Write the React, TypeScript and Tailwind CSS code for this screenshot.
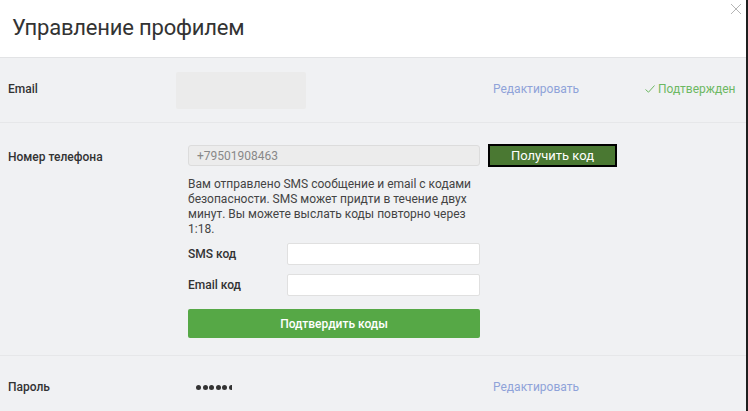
import React from "react";

export default function App() {
  return (
    <div
      className="relative w-[748px] h-[411px] overflow-hidden bg-[#f0f1f3] text-[#333]"
      style={{ fontFamily: "Roboto, 'Liberation Sans', sans-serif" }}
    >
      <div className="flex flex-col w-[746px] h-full">
        {/* Header */}
        <div className="relative h-[58px] bg-white border-b border-[#e2e3e5] flex items-center pl-[12px] shrink-0">
          <h1 className="text-[22px] font-normal text-[#333] tracking-[-0.2px] mt-[-2px]">Управление профилем</h1>
          <button className="absolute right-[4px] top-[3px] text-[#b5b5b5]" aria-label="close">
            <svg width="12" height="12" viewBox="0 0 12 12" stroke="currentColor" strokeWidth="1" fill="none">
              <path d="M1 1 L11 11 M11 1 L1 11" />
            </svg>
          </button>
        </div>

        {/* Email row */}
        <div className="h-[65px] flex items-center border-b border-[#e6e7e9] shrink-0">
          <div className="w-[176px] pl-[8px] text-[12px] font-medium text-[#333] mt-[-2px]">Email</div>
          <div className="w-[130px] h-[37px] bg-[#ebebeb] rounded-[2px]" />
          <div className="ml-[187px] text-[12px] text-[#8fa3d9] mt-[-2px]">Редактировать</div>
          <div className="ml-[66px] text-[12px] text-[#6cb862] flex items-center gap-[3px] mt-[-2px]">
            <svg width="10" height="8" viewBox="0 0 10 8" fill="none" stroke="currentColor" strokeWidth="1">
              <path d="M0.5 4.5 L3.5 7.2 L9.5 0.5" />
            </svg>
            <span>Подтвержден</span>
          </div>
        </div>

        {/* Phone row */}
        <div className="flex border-b border-[#e6e7e9] pt-[21px] pb-[17px] shrink-0">
          <div className="w-[188px] pl-[8px] pt-[4px] text-[12px] font-medium text-[#333]">Номер телефона</div>
          <div className="flex flex-col">
            <div className="flex items-center gap-[8px]">
              <div className="w-[292px] h-[21px] bg-[#ececec] border border-[#dcdcdc] rounded-[3px] pl-[8px] flex items-center text-[12px] text-[#888]">
                +79501908463
              </div>
              <button className="w-[129px] h-[23px] bg-[#4a7832] border-2 border-black text-white text-[13px] flex items-center justify-center">
                Получить код
              </button>
            </div>
            <p className="w-[292px] mt-[10px] text-[12px] leading-[15px] text-[#444]">
              Вам отправлено SMS сообщение и email с кодами безопасности. SMS может придти в течение двух минут. Вы можете выслать коды повторно через 1:18.
            </p>
            <div className="flex items-center mt-[6px]">
              <div className="w-[99px] text-[12px] font-medium text-[#333]">SMS код</div>
              <input className="w-[193px] h-[22px] bg-white border border-[#e0e0e0] rounded-[2px] outline-none" />
            </div>
            <div className="flex items-center mt-[9px]">
              <div className="w-[99px] text-[12px] font-medium text-[#333]">Email код</div>
              <input className="w-[193px] h-[22px] bg-white border border-[#e0e0e0] rounded-[2px] outline-none" />
            </div>
            <button className="w-[292px] h-[29px] mt-[13px] bg-[#56a846] rounded-[2px] text-white text-[12px] font-medium">
              Подтвердить коды
            </button>
          </div>
        </div>

        {/* Password row */}
        <div className="flex items-center h-[62px] shrink-0">
          <div className="w-[196px] pl-[8px] text-[12px] font-medium text-[#333]">Пароль</div>
          <div className="w-[297px] flex items-center gap-[1.5px]">
            <span className="w-[5px] h-[5px] rounded-full bg-[#333]" />
            <span className="w-[5px] h-[5px] rounded-full bg-[#333]" />
            <span className="w-[5px] h-[5px] rounded-full bg-[#333]" />
            <span className="w-[5px] h-[5px] rounded-full bg-[#333]" />
            <span className="w-[5px] h-[5px] rounded-full bg-[#333]" />
            <span className="w-[3px] h-[5px] rounded-l-full bg-[#333]" />
          </div>
          <div className="text-[12px] text-[#8fa3d9]">Редактировать</div>
        </div>
      </div>
      <div className="absolute right-0 top-0 w-[2px] h-full bg-[#1e1e1e]" />
    </div>
  );
}
